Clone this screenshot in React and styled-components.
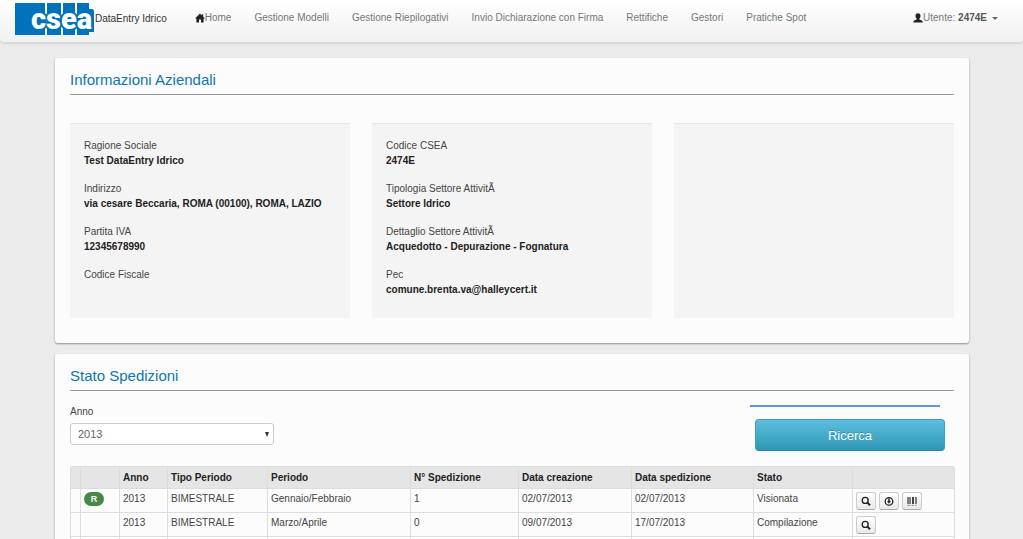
import React, { useState } from 'react';
import styled, { createGlobalStyle } from 'styled-components';

const NAV_LINKS = [
  'Gestione Modelli',
  'Gestione Riepilogativi',
  'Invio Dichiarazione con Firma',
  'Rettifiche',
  'Gestori',
  'Pratiche Spot',
];

const COMPANY = [
  [
    ['Ragione Sociale', 'Test DataEntry Idrico'],
    ['Indirizzo', 'via cesare Beccaria, ROMA (00100), ROMA, LAZIO'],
    ['Partita IVA', '12345678990'],
    ['Codice Fiscale', ''],
  ],
  [
    ['Codice CSEA', '2474E'],
    ['Tipologia Settore AttivitÃ', 'Settore Idrico'],
    ['Dettaglio Settore AttivitÃ', 'Acquedotto - Depurazione - Fognatura'],
    ['Pec', 'comune.brenta.va@halleycert.it'],
  ],
  [],
];

const COLUMNS = [
  { label: '', width: 10 },
  { label: '', width: 39 },
  { label: 'Anno', width: 48 },
  { label: 'Tipo Periodo', width: 100 },
  { label: 'Periodo', width: 143 },
  { label: 'N° Spedizione', width: 108 },
  { label: 'Data creazione', width: 113 },
  { label: 'Data spedizione', width: 122 },
  { label: 'Stato', width: 99 },
  { label: '', width: 102 },
];

const ROWS = [
  {
    badge: 'R',
    cells: ['2013', 'BIMESTRALE', 'Gennaio/Febbraio', '1', '02/07/2013', '02/07/2013', 'Visionata'],
    actions: ['search', 'receipt', 'barcode'],
  },
  {
    cells: ['2013', 'BIMESTRALE', 'Marzo/Aprile', '0', '09/07/2013', '17/07/2013', 'Compilazione'],
    actions: ['search'],
  },
  {
    cells: ['', '', '', '', '', '', ''],
    actions: ['search', 'receipt', 'barcode'],
  },
];

const Logo = () => (
  <svg width='80' height='32' viewBox='0 0 80 32' aria-label='csea'>
    <path
      fill='#0072bc'
      d='M0 0H30V32H0zM32 0H46V32H32zM48 0H60V32H48zM62 0H74V32H62zM73 6H77Q79 6 79 9V29H73z'
    />
    <SLogoText x='16' y='26'>
      csea
    </SLogoText>
  </svg>
);

const HomeIcon = () => (
  <svg width='10' height='10' viewBox='0 0 10 10' fill='#222'>
    <path d='M5 0.6L6.9 2.5V1.2H8.2V3.8L10 5.6H8.6V9.4H6V6.4H4V9.4H1.4V5.6H0z' />
  </svg>
);

const UserIcon = () => (
  <svg width='10' height='10' viewBox='0 0 10 10' fill='#222'>
    <path d='M5 0.2C6.7 0.2 7.6 1.4 7.5 3C7.4 4.4 6.8 5.2 6.3 5.8V6.5L8.8 7.4Q9.8 7.9 9.8 9.6H0.2Q0.2 7.9 1.2 7.4L3.7 6.5V5.8C3.2 5.2 2.6 4.4 2.5 3C2.4 1.4 3.3 0.2 5 0.2z' />
  </svg>
);

const ActionIcon = ({ type }) => (
  <svg width='12' height='12' viewBox='0 0 12 12' fill='none' stroke='#222'>
    {type === 'search' && (
      <>
        <circle cx='5.2' cy='5.4' r='3' strokeWidth='1.4' />
        <path d='M7.4 7.6L10 10.2' strokeWidth='2' />
      </>
    )}
    {type === 'receipt' && (
      <>
        <circle cx='6' cy='6.4' r='3.8' strokeWidth='1.3' />
        <path d='M6 3.4V6.4' strokeWidth='1.6' />
        <path d='M4 6H8L6 8.8z' fill='#222' stroke='none' />
      </>
    )}
    {type === 'barcode' && (
      <>
        <path d='M2 2V9M4 2V9M10 2V9' strokeWidth='1.3' stroke='#444' />
        <path d='M7 2V9' strokeWidth='2' stroke='#444' />
        <path d='M1.5 10.4H4.4M5.6 10.4H7.8M9 10.4H10.5' strokeWidth='1' stroke='#888' />
      </>
    )}
  </svg>
);

const Navbar = () => (
  <SNavbar>
    <SBrand href='#'>
      <Logo />
      DataEntry Idrico
    </SBrand>
    <SNavLinks>
      <SNavLink href='#'>
        <HomeIcon />
        Home
      </SNavLink>
      {NAV_LINKS.map((link) => (
        <SNavLink href='#' key={link}>
          {link}
        </SNavLink>
      ))}
    </SNavLinks>
    <SUserButton type='button'>
      <UserIcon />
      Utente:&nbsp;<b>2474E</b>
      <SCaret />
    </SUserButton>
  </SNavbar>
);

export default () => {
  const [year, setYear] = useState('2013');

  return (
    <>
      <GlobalStyle />
      <Navbar />
      <SMain>
        <SPanel>
          <STitle>Informazioni Aziendali</STitle>
          <SInfoGrid>
            {COMPANY.map((fields, i) => (
              <SInfoBox key={i}>
                {fields.map(([label, value]) => (
                  <div key={label}>
                    <SInfoLabel>{label}</SInfoLabel>
                    <SInfoValue>{value}</SInfoValue>
                  </div>
                ))}
              </SInfoBox>
            ))}
          </SInfoGrid>
        </SPanel>

        <SPanel>
          <STitle>Stato Spedizioni</STitle>
          <SFilter>
            <SField>
              <label htmlFor='anno'>Anno</label>
              <SSelectWrap>
                <SSelect id='anno' value={year} onChange={(e) => setYear(e.target.value)}>
                  <option>2013</option>
                </SSelect>
              </SSelectWrap>
            </SField>
            <SSearch>
              <SSearchLine />
              <SSearchButton type='button'>Ricerca</SSearchButton>
            </SSearch>
          </SFilter>
          <STable>
            <colgroup>
              {COLUMNS.map((col, i) => (
                <SCol key={i} $width={col.width} />
              ))}
            </colgroup>
            <thead>
              <tr>
                {COLUMNS.map((col, i) => (
                  <STh key={i}>{col.label}</STh>
                ))}
              </tr>
            </thead>
            <tbody>
              {ROWS.map((row, i) => (
                <tr key={i}>
                  <STd />
                  <STd>{row.badge && <SBadge>{row.badge}</SBadge>}</STd>
                  {row.cells.map((cell, j) => (
                    <STd key={j}>{cell}</STd>
                  ))}
                  <STd>
                    <SActions>
                      {row.actions.map((type) => (
                        <SActionButton type='button' key={type} aria-label={type}>
                          <ActionIcon type={type} />
                        </SActionButton>
                      ))}
                    </SActions>
                  </STd>
                </tr>
              ))}
            </tbody>
          </STable>
        </SPanel>
      </SMain>
    </>
  );
};

const GlobalStyle = createGlobalStyle`
  * {
    box-sizing: border-box;
  }
  body {
    margin: 0;
    background: #ebebeb;
    color: #444;
    font: 10px/14px 'Liberation Sans', Arial, sans-serif;
  }
  button,
  select {
    font-family: inherit;
  }
`;

const SLogoText = styled.text`
  fill: #fff;
  stroke: #0072bc;
  stroke-width: 4px;
  stroke-linejoin: round;
  paint-order: stroke;
  font: 900 29px Roboto, 'Liberation Sans', sans-serif;
`;

const SNavbar = styled.nav`
  display: flex;
  align-items: flex-start;
  padding: 3px 25px 7px 15px;
  background: linear-gradient(#fff, #f1f1f1);
  border-bottom: 1px solid #d8d8d8;
  border-radius: 0 0 4px 4px;
  box-shadow: 0 1px 2px rgba(0, 0, 0, 0.1);
`;

const SBrand = styled.a`
  display: flex;
  align-items: center;
  color: #333;
  text-decoration: none;
`;

const SNavLinks = styled.div`
  display: flex;
  flex: 1;
  gap: 23px;
  padding: 8px 0 0 28px;
`;

const SNavLink = styled.a`
  display: flex;
  align-items: center;
  color: #777;
  text-decoration: none;
  white-space: nowrap;
`;

const SUserButton = styled.button`
  display: flex;
  align-items: center;
  margin-top: 8px;
  padding: 0;
  border: 0;
  background: none;
  color: #777;
  font-size: 10px;
  line-height: 14px;
  white-space: nowrap;

  b {
    color: #555;
  }
`;

const SCaret = styled.span`
  margin-left: 5px;
  border: 3px solid transparent;
  border-top-color: #666;
  border-bottom: 0;
`;

const SMain = styled.main`
  display: flex;
  flex-direction: column;
  gap: 11px;
  padding: 15px 54px 11px 55px;
`;

const SPanel = styled.section`
  padding: 12px 15px 25px;
  background: #fcfcfc;
  border-radius: 3px;
  box-shadow: 0 1px 2px rgba(0, 0, 0, 0.4);
`;

const STitle = styled.h2`
  margin: 0;
  padding-bottom: 4px;
  border-bottom: 1px solid #999;
  color: #0f76ac;
  font-size: 15px;
  font-weight: normal;
  line-height: 20px;
`;

const SInfoGrid = styled.div`
  display: grid;
  grid-template-columns: repeat(3, 1fr);
  gap: 22px;
  margin-top: 28px;
`;

const SInfoBox = styled.div`
  display: flex;
  flex-direction: column;
  gap: 14px;
  padding: 15px 14px 21px;
  border-top: 1px solid #e8e8e8;
  background: #f4f4f4;
`;

const SInfoLabel = styled.div`
  line-height: 14px;
`;

const SInfoValue = styled.div`
  min-height: 15px;
  color: #222;
  font-weight: bold;
  line-height: 15px;
`;

const SFilter = styled.div`
  display: flex;
  justify-content: space-between;
  align-items: flex-start;
  padding: 14px 9px 15px 0;
`;

const SField = styled.div`
  display: flex;
  flex-direction: column;
  gap: 4px;
  width: 204px;
`;

const SSelectWrap = styled.div`
  position: relative;

  &::after {
    content: '';
    position: absolute;
    top: 9px;
    right: 5px;
    border: 2px solid transparent;
    border-top: 5px solid #333;
    border-bottom: 0;
    pointer-events: none;
  }
`;

const SSelect = styled.select`
  display: block;
  width: 100%;
  height: 22px;
  padding: 0 7px;
  appearance: none;
  border: 1px solid #ccc;
  border-radius: 3px;
  background: #fff;
  color: #666;
  font-size: 11px;
`;

const SSearch = styled.div`
  width: 195px;
`;

const SSearchLine = styled.div`
  height: 2px;
  margin-right: 5px;
  background: #6594dc;
`;

const SSearchButton = styled.button`
  display: block;
  width: 190px;
  height: 32px;
  margin: 12px 0 0 5px;
  border: 1px solid #3d9dba;
  border-bottom-color: #2b86a3;
  border-radius: 4px;
  background: linear-gradient(#5bc0de, #2f96b4);
  color: #fff;
  font-size: 13px;
  text-shadow: 0 -1px 0 rgba(0, 0, 0, 0.2);
`;

const STable = styled.table`
  width: 100%;
  table-layout: fixed;
  border: 1px solid #ddd;
  border-left: 0;
  border-radius: 3px;
  border-collapse: separate;
  border-spacing: 0;
`;

const SCol = styled.col`
  width: ${({ $width }) => $width}px;
`;

const STh = styled.th`
  height: 21px;
  padding: 4px 3px 3px;
  border-left: 1px solid #ddd;
  background: #e5e5e5;
  color: #222;
  text-align: left;
  line-height: 14px;
`;

const STd = styled.td`
  height: 24px;
  padding: 3px 3px 2px;
  border-top: 1px solid #ddd;
  border-left: 1px solid #ddd;
  line-height: 14px;
  vertical-align: top;
`;

const SBadge = styled.span`
  display: block;
  width: 20px;
  border-radius: 7px;
  background: #468847;
  color: #fff;
  font-size: 9px;
  font-weight: bold;
  text-align: center;
`;

const SActions = styled.div`
  display: flex;
  gap: 3px;
`;

const SActionButton = styled.button`
  display: flex;
  align-items: center;
  justify-content: center;
  width: 20px;
  height: 18px;
  padding: 0;
  border: 1px solid #ccc;
  border-bottom-color: #aaa;
  border-radius: 3px;
  background: linear-gradient(#fff, #e8e8e8);
`;
